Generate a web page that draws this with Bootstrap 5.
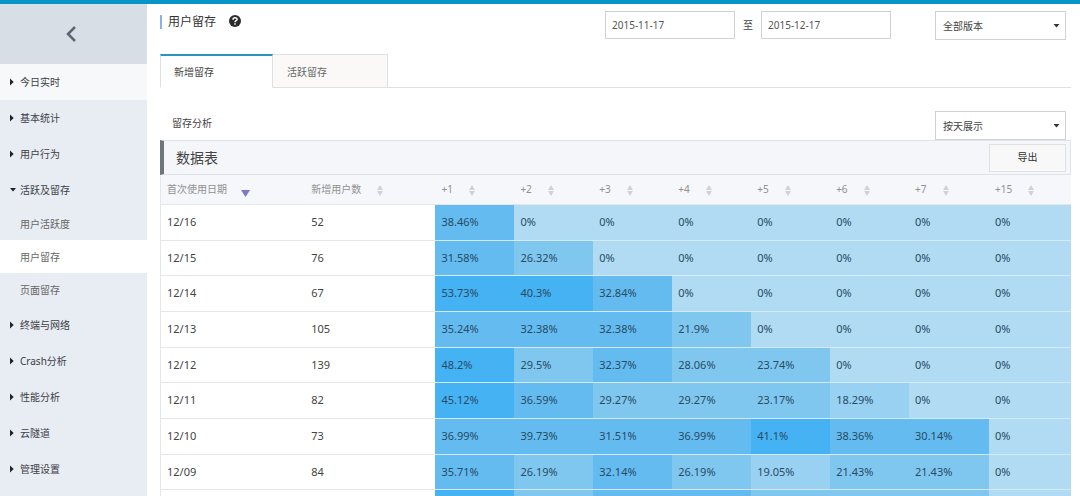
<!DOCTYPE html>
<html lang="zh-CN">
<head>
<meta charset="utf-8">
<meta name="viewport" content="width=device-width, initial-scale=1">
<title>用户留存</title>
<link href="https://cdn.jsdelivr.net/npm/bootstrap@5.3.0/dist/css/bootstrap.min.css" rel="stylesheet">
<style>
body{font-family:"Noto Sans","Noto Sans CJK SC",sans-serif;font-size:10px;line-height:16px;color:#444;background:#fff}
.shell{border-top:4px solid #0795c9}
.side{width:147px;background:#e8ecf3}
.side-toggle{height:60px;background:#d8dee5;border:0;padding:0 6px 0 0}
.side a{display:flex;align-items:center;height:36px;padding-left:10px;color:#3c4046;text-decoration:none}
.side a.today{background:#f6f8fa}
.side .sub{margin:-1px 0 1px}
.side .sub a{height:33px;padding-left:20px;color:#666}
.side .sub a.active{background:#fff}
.arrow{width:10px;height:8px;flex:none}
.main{padding:0 9px 0 13px}
.topbar{height:50px;padding:7px 5px 0 0}
.topbar h1{font-size:12px;line-height:14px;margin:4px 0 0;padding-left:6px;border-left:2px solid #8fb0ea;font-weight:400;color:#333}
.help{width:12px;height:12px;margin:4px 0 0 13px}
.fld{width:130px;height:28px;padding:0 6px;border:1px solid #d2d2d2;border-radius:0;color:#555;font-size:10px;line-height:16px}
.pick{width:131px;height:29px;padding:0 24px 0 7px;border:1px solid #d2d2d2;border-radius:0;color:#444;font-size:10px;line-height:16px;background-image:url("data:image/svg+xml,%3Csvg xmlns='http://www.w3.org/2000/svg' viewBox='0 0 6 4'%3E%3Cpath fill='%23333' d='M0 0h6L3 3.500z'/%3E%3C/svg%3E");background-size:7px 4px;background-position:right 5px center}
.version{margin-left:44px}
.to{width:26px;line-height:28px}
.tabs{border-bottom:1px solid #e0e0e0}
.tabs .nav-link{width:115px;height:34px;margin-bottom:-1px;padding:9px 14px 0;border:1px solid #e0e0e0;border-left:0;border-radius:0;background:#faf9f8;color:#666}
.tabs .nav-link.active{width:113px;padding:8px 13px 0;border-width:2px 1px 1px;border-style:solid;border-color:#2a93c0 #e0e0e0 #fff;background:#fff;color:#444}
.tools{padding:23px 5px 0 12px}
.panel-title{height:35px;border:1px solid #dfe3e9;border-left:4px solid #6e757b;background:#f4f6fa;padding:0 4px 0 12px}
.panel-title h2{font-size:14px;line-height:20px;color:#444;font-weight:400}
.export{width:77px;height:28px;padding:0;border:1px solid #dfe0e2;border-radius:0;background:#f8f8f8;font-size:10px;color:#333}
.retain{table-layout:fixed;margin:0;border-left:1px solid #e4e7ea}
.retain th,.retain td{padding:0 0 0 6px;vertical-align:middle;border-bottom:1px solid #e4e6e8;color:#444}
.retain th{height:29px;background:#f5f7fb;color:#909090;font-weight:400;font-size:10px}
.retain td{height:36px;font-size:11px}
.retain tr:nth-child(3n+2) td{height:35px}
.retain td.k{border-bottom-color:#d3ebf8;color:#274b63}
.sort{width:6px;height:11px;margin-left:16px}
.sorted{width:9px;height:7px;margin:5px 0 0 14px}
.retain .z{background:#b0dbf2}.retain .a{background:#98d1f2}.retain .b{background:#80c7f0}.retain .c{background:#63bbf0}.retain .d{background:#45b2f3}
</style>
</head>
<body>
<svg class="d-none">
<symbol id="right" viewBox="0 0 10 8"><path fill="#222" d="M0 0.500L3.700 4 0 7.500z"/></symbol>
<symbol id="down" viewBox="0 0 10 8"><path fill="#222" d="M0 2H6L3 5.500z"/></symbol>
<symbol id="updown" viewBox="0 0 6 11"><path fill="#cfd2d6" d="M3 0L6 5H0zM0 6H6L3 11z"/></symbol>
</svg>
<div class="shell d-flex vh-100 overflow-hidden">
<nav class="side flex-shrink-0 d-flex flex-column">
<button class="side-toggle d-flex align-items-center justify-content-center flex-shrink-0" aria-label="收起"><svg width="12" height="18" viewBox="0 0 12 18"><path d="M10 2L3 9l7 7" fill="none" stroke="#5e6675" stroke-width="2.500"/></svg></button>
<a href="#" class="today"><svg class="arrow"><use href="#right"/></svg>今日实时</a>
<a href="#"><svg class="arrow"><use href="#right"/></svg>基本统计</a>
<a href="#"><svg class="arrow"><use href="#right"/></svg>用户行为</a>
<a href="#"><svg class="arrow"><use href="#down"/></svg>活跃及留存</a>
<div class="sub"><a href="#">用户活跃度</a><a href="#" class="active">用户留存</a><a href="#">页面留存</a></div>
<a href="#"><svg class="arrow"><use href="#right"/></svg>终端与网络</a>
<a href="#"><svg class="arrow"><use href="#right"/></svg>Crash分析</a>
<a href="#"><svg class="arrow"><use href="#right"/></svg>性能分析</a>
<a href="#"><svg class="arrow"><use href="#right"/></svg>云隧道</a>
<a href="#"><svg class="arrow"><use href="#right"/></svg>管理设置</a>
</nav>
<main class="main flex-grow-1">
<header class="topbar d-flex align-items-start">
<h1>用户留存</h1>
<svg class="help" viewBox="0 0 12 12"><circle cx="6" cy="6" r="6" fill="#2c2c2c"/><path d="M4 4.700C4 2.100 8.100 2.200 8.100 4.400C8.100 5.800 6 5.700 6 7.300M6 8.300V9.800" fill="none" stroke="#fff" stroke-width="1.500"/></svg>
<input class="fld form-control ms-auto" value="2015-11-17" aria-label="开始日期">
<span class="to text-center">至</span>
<input class="fld form-control" value="2015-12-17" aria-label="结束日期">
<select class="pick version form-select" aria-label="版本"><option>全部版本</option></select>
</header>
<ul class="tabs nav">
<li class="nav-item"><a class="nav-link active" href="#">新增留存</a></li>
<li class="nav-item"><a class="nav-link" href="#">活跃留存</a></li>
</ul>
<div class="tools d-flex justify-content-between align-items-start">
<label for="unit" class="pt-1">留存分析</label>
<select id="unit" class="pick form-select"><option>按天展示</option></select>
</div>
<div class="panel-title d-flex align-items-center justify-content-between">
<h2 class="m-0">数据表</h2>
<button class="export btn">导出</button>
</div>
<table class="retain table">
<colgroup><col style="width:15.9%"><col style="width:14.3%"><col style="width:8.67%"><col style="width:8.67%"><col style="width:8.67%"><col style="width:8.67%"><col style="width:8.67%"><col style="width:8.67%"><col style="width:8.78%"><col></colgroup>
<thead><tr>
<th>首次使用日期<svg class="sorted" viewBox="0 0 9 7"><path fill="#7b78c8" d="M0 0h9L4.500 7z"/></svg></th>
<th>新增用户数<svg class="sort"><use href="#updown"/></svg></th>
<th>+1<svg class="sort"><use href="#updown"/></svg></th>
<th>+2<svg class="sort"><use href="#updown"/></svg></th>
<th>+3<svg class="sort"><use href="#updown"/></svg></th>
<th>+4<svg class="sort"><use href="#updown"/></svg></th>
<th>+5<svg class="sort"><use href="#updown"/></svg></th>
<th>+6<svg class="sort"><use href="#updown"/></svg></th>
<th>+7<svg class="sort"><use href="#updown"/></svg></th>
<th>+15<svg class="sort"><use href="#updown"/></svg></th>
</tr></thead>
<tbody>
<tr><td>12/16</td><td>52</td><td class="k c">38.46%</td><td class="k z">0%</td><td class="k z">0%</td><td class="k z">0%</td><td class="k z">0%</td><td class="k z">0%</td><td class="k z">0%</td><td class="k z">0%</td></tr>
<tr><td>12/15</td><td>76</td><td class="k c">31.58%</td><td class="k b">26.32%</td><td class="k z">0%</td><td class="k z">0%</td><td class="k z">0%</td><td class="k z">0%</td><td class="k z">0%</td><td class="k z">0%</td></tr>
<tr><td>12/14</td><td>67</td><td class="k d">53.73%</td><td class="k d">40.3%</td><td class="k c">32.84%</td><td class="k z">0%</td><td class="k z">0%</td><td class="k z">0%</td><td class="k z">0%</td><td class="k z">0%</td></tr>
<tr><td>12/13</td><td>105</td><td class="k c">35.24%</td><td class="k c">32.38%</td><td class="k c">32.38%</td><td class="k b">21.9%</td><td class="k z">0%</td><td class="k z">0%</td><td class="k z">0%</td><td class="k z">0%</td></tr>
<tr><td>12/12</td><td>139</td><td class="k d">48.2%</td><td class="k b">29.5%</td><td class="k c">32.37%</td><td class="k b">28.06%</td><td class="k b">23.74%</td><td class="k z">0%</td><td class="k z">0%</td><td class="k z">0%</td></tr>
<tr><td>12/11</td><td>82</td><td class="k d">45.12%</td><td class="k c">36.59%</td><td class="k b">29.27%</td><td class="k b">29.27%</td><td class="k b">23.17%</td><td class="k a">18.29%</td><td class="k z">0%</td><td class="k z">0%</td></tr>
<tr><td>12/10</td><td>73</td><td class="k c">36.99%</td><td class="k c">39.73%</td><td class="k c">31.51%</td><td class="k c">36.99%</td><td class="k d">41.1%</td><td class="k c">38.36%</td><td class="k c">30.14%</td><td class="k z">0%</td></tr>
<tr><td>12/09</td><td>84</td><td class="k c">35.71%</td><td class="k b">26.19%</td><td class="k c">32.14%</td><td class="k b">26.19%</td><td class="k a">19.05%</td><td class="k b">21.43%</td><td class="k b">21.43%</td><td class="k z">0%</td></tr>
<tr><td></td><td></td><td class="k d"></td><td class="k b"></td><td class="k c"></td><td class="k c"></td><td class="k b"></td><td class="k b"></td><td class="k b"></td><td class="k z"></td></tr>
</tbody>
</table>
</main>
</div>
<script src="https://cdn.jsdelivr.net/npm/bootstrap@5.3.0/dist/js/bootstrap.bundle.min.js"></script>
</body>
</html>
